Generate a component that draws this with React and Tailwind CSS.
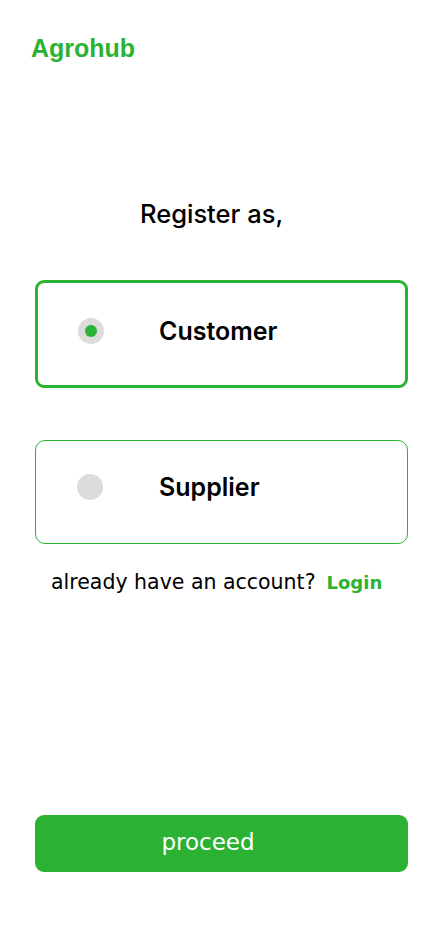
import { useState } from 'react';

function RoleCard({ label, selected, onClick }) {
    return (
        <button
            onClick={onClick}
            className={
                selected
                    ? 'flex items-center w-[373px] h-[108px] rounded-[9px] border-[3px] border-[#2bb233] bg-white pl-[40px] pb-[6px] text-left'
                    : 'flex items-center w-[373px] h-[104px] rounded-[10px] border border-[#2bb233] bg-white pl-[41px] pb-[10px] text-left'
            }
        >
            <span className="flex items-center justify-center w-[26px] h-[26px] rounded-full bg-[#dcdcdc]">
                {selected && <span className="w-[12px] h-[12px] rounded-full bg-[#2bb233]" />}
            </span>
            <span className={selected ? 'ml-[55px] text-[25px] leading-[30px] font-semibold text-black' : 'ml-[56px] text-[25px] leading-[30px] font-semibold text-black'}>
                {label}
            </span>
        </button>
    );
}

export default function App() {
    const [role, setRole] = useState('customer');

    return (
        <div className="w-[430px] h-[932px] bg-white flex flex-col font-['Inter',sans-serif]">
            <div className="pl-[31px] pt-[33px] text-[25px] font-bold text-[#2bb233] leading-[30px] font-['Liberation_Sans',Arial,sans-serif]">
                Agrohub
            </div>

            <div className="mt-[136px] pl-[140px] text-[25.5px] font-medium text-black leading-[30px]">
                Register as,
            </div>

            <div className="mt-[51px] ml-[35px] flex flex-col gap-[52px]">
                <RoleCard label="Customer" selected={role === 'customer'} onClick={() => setRole('customer')} />
                <RoleCard label="Supplier" selected={role === 'supplier'} onClick={() => setRole('supplier')} />
            </div>

            <div className="mt-[25px] pl-[51px] flex items-baseline h-[26px] leading-[26px] text-black font-['DejaVu_Sans',Verdana,sans-serif]">
                <span className="text-[20.5px]">already have an account?</span>
                <span className="ml-[11px] text-[18px] font-semibold text-[#2bb233]">Login</span>
            </div>

            <button className="mt-[220px] ml-[35px] w-[373px] h-[57px] rounded-[9px] bg-[#2bb233] text-white text-[23px] pr-[27px] pb-[3px] font-['DejaVu_Sans',Verdana,sans-serif]">
                proceed
            </button>
        </div>
    );
}
